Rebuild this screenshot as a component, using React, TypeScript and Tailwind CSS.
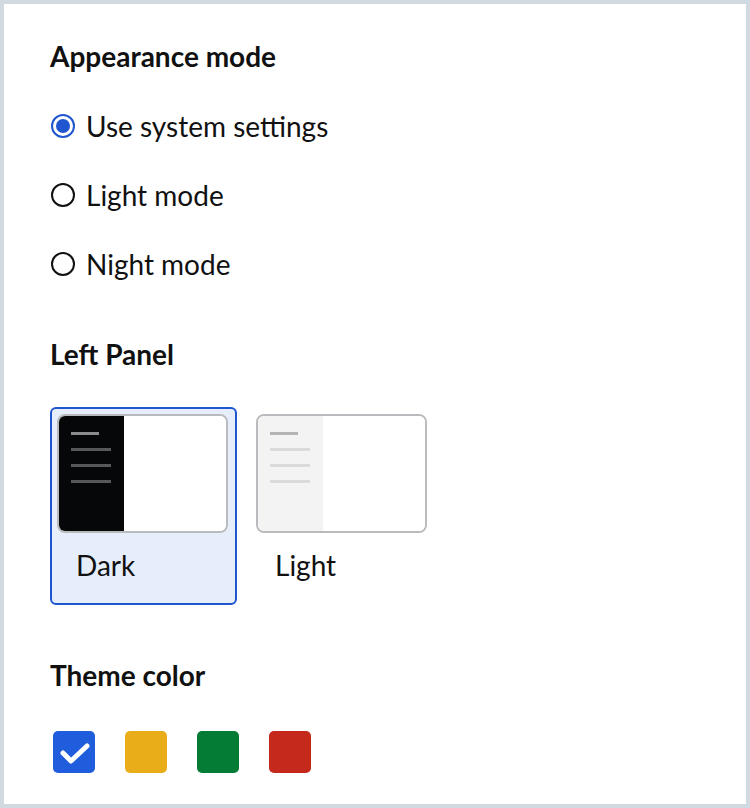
import React, { useState } from "react";

const font = { fontFamily: "Lato, 'Noto Sans', sans-serif" };

function Radio({ checked, label, onClick }: { checked: boolean; label: string; onClick: () => void }) {
  return (
    <button type="button" onClick={onClick} className="flex h-8 items-center gap-[11px] pl-[1px] text-left">
      <span
        className={
          "flex h-[24px] w-[24px] items-center justify-center rounded-full border-2 bg-white " +
          (checked ? "border-[#1f56d0]" : "border-[#111111]")
        }
      >
        {checked && <span className="h-[14px] w-[14px] rounded-full bg-[#1f56d0]" />}
      </span>
      <span className="text-[28px] leading-8 text-[#111111]">{label}</span>
    </button>
  );
}

function PanelPreview({ dark }: { dark: boolean }) {
  const side = dark ? "bg-[#060709]" : "bg-[#f3f3f3]";
  const first = dark ? "bg-[#8b8b8b]" : "bg-[#b5b5b5]";
  const rest = dark ? "bg-[#585858]" : "bg-[#dadada]";
  return (
    <div className="flex h-[119px] w-[171px] shrink-0 overflow-hidden rounded-[8px] border-2 border-[#b9bbbe] bg-white">
      <div className={"flex w-[65px] flex-col gap-[13px] pl-[12px] pt-[16px] " + side}>
        <div className={"h-[3px] w-[28px] " + first} />
        <div className={"h-[3px] w-[40px] " + rest} />
        <div className={"h-[3px] w-[40px] " + rest} />
        <div className={"h-[3px] w-[40px] " + rest} />
      </div>
      <div className="flex-1 bg-white" />
    </div>
  );
}

function PanelCard({ dark, selected, label, onClick }: { dark: boolean; selected: boolean; label: string; onClick: () => void }) {
  return (
    <button
      type="button"
      onClick={onClick}
      className={
        "flex h-[198px] w-[187px] flex-col rounded-[6px] border-2 p-[5px] text-left " +
        (selected ? "border-[#1f56d0] bg-[#e7eefb]" : "border-transparent bg-transparent")
      }
    >
      <PanelPreview dark={dark} />
      <span className="mt-[16px] pl-[19px] text-[28px] leading-8 text-[#111111]">{label}</span>
    </button>
  );
}

const swatches = ["bg-[#1f5ddd]", "bg-[#e8ad19]", "bg-[#057c35]", "bg-[#c4291b]"];

export default function App() {
  const [mode, setMode] = useState(0);
  const [panel, setPanel] = useState(0);
  const [theme, setTheme] = useState(0);
  const modes = ["Use system settings", "Light mode", "Night mode"];

  return (
    <div className="h-[808px] w-[750px] bg-[#d0dae0] p-[4px]" style={font}>
      <div className="flex h-full flex-col bg-white pl-[46px] pt-[36px]">
        <h2 className="text-[28px] font-bold leading-8 text-[#111111]">Appearance mode</h2>
        <div className="mt-[38px] flex flex-col gap-[37px]">
          {modes.map((m, i) => (
            <Radio key={m} label={m} checked={mode === i} onClick={() => setMode(i)} />
          ))}
        </div>

        <h2 className="mt-[58px] text-[28px] font-bold leading-8 text-[#111111]">Left Panel</h2>
        <div className="mt-[37px] flex gap-[12px]">
          <PanelCard dark label="Dark" selected={panel === 0} onClick={() => setPanel(0)} />
          <PanelCard dark={false} label="Light" selected={panel === 1} onClick={() => setPanel(1)} />
        </div>

        <h2 className="mt-[54px] text-[28px] font-bold leading-8 text-[#111111]">Theme color</h2>
        <div className="mt-[40px] flex gap-[30px] pl-[3px]">
          {swatches.map((c, i) => (
            <button
              key={c}
              type="button"
              onClick={() => setTheme(i)}
              className={"flex h-[42px] w-[42px] items-center justify-center rounded-[5px] " + c}
            >
              {theme === i && (
                <svg width="42" height="42" viewBox="0 0 42 42" fill="none">
                  <path d="M10 22 L18 30 L34 15" stroke="white" strokeWidth="5" strokeLinecap="round" strokeLinejoin="round" />
                </svg>
              )}
            </button>
          ))}
        </div>
      </div>
    </div>
  );
}
